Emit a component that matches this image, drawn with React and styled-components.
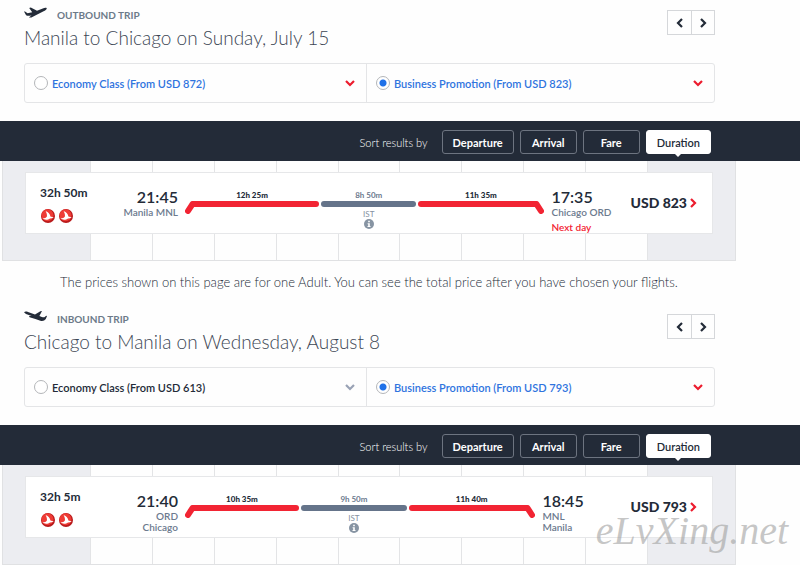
import React, { useState } from 'react';
import styled, { createGlobalStyle, css } from 'styled-components';

const trips = [
  {
    id: 'outbound',
    label: 'Outbound trip',
    title: 'Manila to Chicago on Sunday, July 15',
    fares: [
      { name: 'Economy Class (From USD 872)', available: true },
      { name: 'Business Promotion (From USD 823)', available: true }
    ],
    flight: {
      duration: '32h 50m',
      depart: { time: '21:45', lines: ['Manila MNL'] },
      arrive: { time: '17:35', lines: ['Chicago ORD'], note: 'Next day' },
      legs: [
        { minutes: 745, text: '12h 25m' },
        { minutes: 530, text: '8h 50m', stop: 'IST' },
        { minutes: 695, text: '11h 35m' }
      ],
      arriveWidth: 79,
      price: 'USD 823'
    }
  },
  {
    id: 'inbound',
    label: 'Inbound trip',
    title: 'Chicago to Manila on Wednesday, August 8',
    fares: [
      { name: 'Economy Class (From USD 613)', available: false },
      { name: 'Business Promotion (From USD 793)', available: true }
    ],
    flight: {
      duration: '32h 5m',
      depart: { time: '21:40', lines: ['ORD', 'Chicago'] },
      arrive: { time: '18:45', lines: ['MNL', 'Manila'] },
      legs: [
        { minutes: 635, text: '10h 35m' },
        { minutes: 590, text: '9h 50m', stop: 'IST' },
        { minutes: 700, text: '11h 40m' }
      ],
      arriveWidth: 88,
      price: 'USD 793'
    }
  }
];

const sortOptions = ['Departure', 'Arrival', 'Fare', 'Duration'];

const Plane = ({ landing }) => (
  <svg width="23" height="11" viewBox="0 0 23 11" fill="#232b38" aria-hidden="true">
    {landing ? (
      <path d="M0 1.2C1 .4 2.6.5 4 1L11 3.4 16.4.2 18 .1 15.4 5C17.3 5.9 19.2 6.4 20.4 6.2L22.2 4.8 23 5.1 21.8 8C20.5 9.7 18.6 10.3 16.4 9.7L11.4 8 5.6 6.2 5 4.9 7.6 5 2 3Z" />
    ) : (
      <path d="M0 4.6L1 4.4 3.6 6.2 8.2 5.3 5.2 1.1 6.8.6 13 3.8 18.8 1.4C20.6.6 22.2.6 22.8 1.2 22.6 2.6 21.2 3.5 19.6 4.3L14.2 6.9 7.4 10.6 4.9 10.6 7.6 8.3C5.6 9 3.2 9 2.1 8.2Z" />
    )}
  </svg>
);

const Chevron = ({ dir = 'down', size = 10 }) => {
  const points = {
    down: '1,3 5,7 9,3',
    left: '7,1 3,5 7,9',
    right: '3,1 7,5 3,9'
  };
  return (
    <svg width={size} height={size} viewBox="0 0 10 10" aria-hidden="true">
      <polyline points={points[dir]} fill="none" stroke="currentColor" strokeWidth="2.2" />
    </svg>
  );
};

const AirlineLogo = () => (
  <svg width="14" height="14" viewBox="0 0 14 14" role="img" aria-label="Airline">
    <circle cx="7" cy="7" r="7" fill="#b81a1b" />
    <circle cx="6.5" cy="6.2" r="6" fill="#ee3b35" />
    <path d="M4.6 2C7.4 3 9 5.2 9.4 7.6L12.8 8.6C11.4 9.2 10.4 9.4 9 9.4 7 11 3.6 11 1.4 9.6 3.6 9.4 5.4 8.8 5.9 7.6 6.2 5.8 5.6 3.8 4.6 2Z" fill="#fff" />
  </svg>
);

const Hook = ({ end }) => (
  <svg width="10" height="13" viewBox="0 0 10 13" aria-hidden="true">
    <path
      d={end ? 'M0 3H2.5L7 10' : 'M10 3H7.5L3 10'}
      fill="none"
      stroke="#f22433"
      strokeWidth="6"
      strokeLinecap="round"
      strokeLinejoin="round"
    />
    <rect x={end ? 0 : 8} width="2" height="6" fill="#f22433" />
  </svg>
);

const Info = () => (
  <svg width="10" height="10" viewBox="0 0 10 10" aria-hidden="true">
    <circle cx="5" cy="5" r="5" fill="#8794a3" />
    <path d="M4.2 1.8h1.6v1.4H4.2zM3.6 4.2h2.2v2.9h.7v1H3.5v-1h.7V5.2h-.6z" fill="#fff" />
  </svg>
);

const Route = ({ legs }) => (
  <Legs>
    {legs.map((leg, i) => (
      <Leg key={leg.text} $minutes={leg.minutes}>
        <LegTime $stop={leg.stop}>{leg.text}</LegTime>
        <Line>
          {i === 0 && <Hook />}
          <Bar $stop={leg.stop} $open={i === 0 ? 'left' : i === legs.length - 1 ? 'right' : ''} />
          {i === legs.length - 1 && <Hook end />}
        </Line>
        {leg.stop && (
          <Stop>
            {leg.stop}
            <InfoButton type="button" aria-label={`Stop at ${leg.stop}`}>
              <Info />
            </InfoButton>
          </Stop>
        )}
      </Leg>
    ))}
  </Legs>
);

const Flight = ({ flight }) => (
  <Board>
    <Columns>
      {Array.from({ length: 11 }, (_, i) => (
        <Column key={i} $shaded={i === 0 || i === 10} />
      ))}
    </Columns>
    <Card>
      <Total>
        {flight.duration}
        <Logos>
          <AirlineLogo />
          <AirlineLogo />
        </Logos>
      </Total>
      <Point $align="right" $width={66}>
        <Time>{flight.depart.time}</Time>
        {flight.depart.lines.map(l => <Airport key={l}>{l}</Airport>)}
      </Point>
      <Route legs={flight.legs} />
      <Point $align="left" $width={flight.arriveWidth}>
        <Time>{flight.arrive.time}</Time>
        {flight.arrive.lines.map(l => <Airport key={l}>{l}</Airport>)}
        {flight.arrive.note && <Note>{flight.arrive.note}</Note>}
      </Point>
      <Price type="button">
        {flight.price}
        <Chevron dir="right" />
      </Price>
    </Card>
  </Board>
);

const Trip = ({ trip }) => {
  const [fare, setFare] = useState(1);
  const [sort, setSort] = useState('Duration');

  return (
    <section>
      <Head>
        <div>
          <Kicker>
            <Plane landing={trip.id === 'inbound'} />
            {trip.label}
          </Kicker>
          <Title>{trip.title}</Title>
        </div>
        <Pager>
          <PageButton type="button" aria-label="Previous day"><Chevron dir="left" /></PageButton>
          <PageButton type="button" aria-label="Next day"><Chevron dir="right" /></PageButton>
        </Pager>
      </Head>
      <Fares>
        {trip.fares.map((f, i) => (
          <Fare key={f.name} $available={f.available}>
            <FareLabel>
              <Radio
                type="radio"
                name={trip.id}
                checked={fare === i}
                onChange={() => setFare(i)}
              />
              {f.name}
            </FareLabel>
            <Expand type="button" aria-label={`Details of ${f.name}`} $available={f.available}>
              <Chevron />
            </Expand>
          </Fare>
        ))}
      </Fares>
      <SortBar>
        <SortText>Sort results by</SortText>
        {sortOptions.map(o => (
          <SortButton key={o} type="button" $active={sort === o} onClick={() => setSort(o)}>
            {o}
          </SortButton>
        ))}
      </SortBar>
      <Flight flight={trip.flight} />
    </section>
  );
};

const App = () => (
  <Page>
    <GlobalStyle />
    <Trip trip={trips[0]} />
    <Notice>
      The prices shown on this page are for one Adult. You can see the total price after you have chosen your flights.
    </Notice>
    <Trip trip={trips[1]} />
    <Watermark>eLvXing.net</Watermark>
  </Page>
);

export default App;

const GlobalStyle = createGlobalStyle`
  * {
    box-sizing: border-box;
  }

  body {
    margin: 0;
    background: #fefefe;
    color: #232b38;
    font-family: Lato, "Liberation Sans", sans-serif;
    font-size: 11px;
  }

  button {
    padding: 0;
    border: 0;
    background: none;
    color: inherit;
    font: inherit;
    cursor: pointer;
  }

  svg {
    display: block;
    flex: none;
  }
`;

const Page = styled.main`
  position: relative;
  overflow: hidden;
`;

const Head = styled.header`
  display: flex;
  justify-content: space-between;
  align-items: flex-start;
  padding: 7px 85px 11px 24px;
`;

const Kicker = styled.div`
  display: flex;
  gap: 10px;
  color: #6c7a89;
  font-size: 10px;
  font-weight: 700;
  line-height: 16px;
  text-transform: uppercase;
`;

const Title = styled.h2`
  margin: 0;
  font-size: 19px;
  font-weight: 300;
  line-height: 29px;
  color: #3c4654;
`;

const Pager = styled.div`
  display: flex;
  margin-top: 3px;
  border: 1px solid #d5d7da;
`;

const PageButton = styled.button`
  display: grid;
  place-items: center;
  width: 23px;
  height: 23px;

  & + & {
    border-left: 1px solid #d5d7da;
  }
`;

const Fares = styled.div`
  display: grid;
  grid-template-columns: 341fr 348fr;
  margin: 0 85px 18px 24px;
  border: 1px solid #e4e5e7;
  border-radius: 3px;
`;

const Fare = styled.div`
  display: flex;
  align-items: center;
  justify-content: space-between;
  height: 38px;
  padding: 0 11px 0 9px;
  color: ${p => (p.$available ? '#2f74de' : '#232b38')};

  & + & {
    border-left: 1px solid #e4e5e7;
  }
`;

const FareLabel = styled.label`
  display: flex;
  align-items: center;
  gap: 4px;
  font-weight: 600;
`;

const Radio = styled.input`
  appearance: none;
  width: 14px;
  height: 14px;
  margin: 0;
  border: 1px solid #b4b6b9;
  border-radius: 50%;
  background: #fff;

  &:checked {
    background: radial-gradient(circle, #1f71e8 3px, #fff 4px);
  }
`;

const Expand = styled.button`
  && {
    color: ${p => (p.$available ? '#ec1c2e' : '#99a2b5')};
  }
`;

const SortBar = styled.div`
  display: flex;
  align-items: center;
  justify-content: flex-end;
  gap: 6px;
  height: 40px;
  padding: 2px 89px 0 24px;
  background: #232b38;
  color: #fff;
`;

const SortText = styled.span`
  margin-right: 8px;
  font-weight: 300;
`;

const SortButton = styled.button`
  && {
    height: 24px;
    min-width: 57px;
    padding: 0 10px;
    border: 1px solid #6d7480;
    border-radius: 3px;
    font-weight: 700;

    ${p => p.$active && css`
      position: relative;
      border-color: #fff;
      background: #fff;
      color: #232b38;
      font-weight: 600;

      &::after {
        content: '';
        position: absolute;
        top: 100%;
        left: 50%;
        margin-left: -4px;
        border: 4px solid transparent;
        border-top-color: #fff;
      }
    `}
  }
`;

const Board = styled.div`
  display: grid;
  margin: 0 64px 0 2px;
  border: solid #e0e1e3;
  border-width: 0 1px 1px;

  & > * {
    grid-area: 1 / 1;
  }
`;

const Columns = styled.div`
  display: grid;
  grid-template-columns: 87px repeat(9, 1fr) 88px;
`;

const Column = styled.div`
  background: ${p => (p.$shaded ? '#ecedf1' : '#fefefe')};

  & + & {
    border-left: 1px solid #e3e4e6;
  }
`;

const Card = styled.article`
  display: flex;
  align-items: flex-start;
  height: 62px;
  margin: 11px 22px 26px;
  padding: 14px 14px 0;
  border: 1px solid #e6e7e9;
  background: #fff;
`;

const Total = styled.div`
  width: 72px;
  font-size: 12px;
  font-weight: 700;
  line-height: 12px;
`;

const Logos = styled.div`
  display: flex;
  gap: 4px;
  padding: 10px 1px 0;
`;

const Point = styled.div`
  flex: none;
  width: ${p => p.$width}px;
  text-align: ${p => p.$align};
`;

const Time = styled.div`
  font-size: 16px;
  font-weight: 600;
  line-height: 20px;
`;

const Airport = styled.div`
  color: #6c7a8e;
  font-size: 10px;
  font-weight: 600;
  line-height: 11px;
`;

const Note = styled(Airport)`
  padding-top: 4px;
  color: #f22433;
`;

const Legs = styled.div`
  display: flex;
  flex: 1;
  gap: 2px;
  padding: 2px 8px 0 7px;
`;

const Leg = styled.div`
  flex: ${p => p.$minutes} 1 0;
  text-align: center;
`;

const LegTime = styled.div`
  color: ${p => (p.$stop ? '#6c7a8e' : '#232b38')};
  font-size: 8px;
  font-weight: ${p => (p.$stop ? 700 : 900)};
  line-height: 12px;
`;

const Line = styled.div`
  display: flex;
  align-items: flex-start;
`;

const radius = {
  left: '0 3px 3px 0',
  right: '3px 0 0 3px'
};

const Bar = styled.div`
  flex: 1;
  height: 6px;
  border-radius: ${p => radius[p.$open] || '3px'};
  background: ${p => (p.$stop ? '#65748a' : '#f22433')};
`;

const Stop = styled.div`
  display: flex;
  flex-direction: column;
  align-items: center;
  padding-top: 2px;
  color: #8491a1;
  font-size: 8px;
  line-height: 10px;
`;

const InfoButton = styled.button`
  height: 10px;
`;

const Price = styled.button`
  && {
    display: flex;
    align-items: center;
    gap: 1px;
    margin-left: auto;
    padding-top: 6px;
    font-size: 14px;
    font-weight: 900;
    line-height: 20px;
    white-space: nowrap;
  }

  svg {
    color: #ec1c2e;
  }
`;

const Notice = styled.p`
  margin: 0;
  padding: 12px 62px 12px 0;
  font-size: 13px;
  font-weight: 300;
  line-height: 19px;
  text-align: center;
`;

const Watermark = styled.div`
  position: absolute;
  right: 12px;
  bottom: 10px;
  color: rgba(160, 160, 160, 0.6);
  font-family: "Liberation Serif", cursive;
  font-size: 40px;
  font-style: italic;
  line-height: 48px;
  pointer-events: none;
`;
